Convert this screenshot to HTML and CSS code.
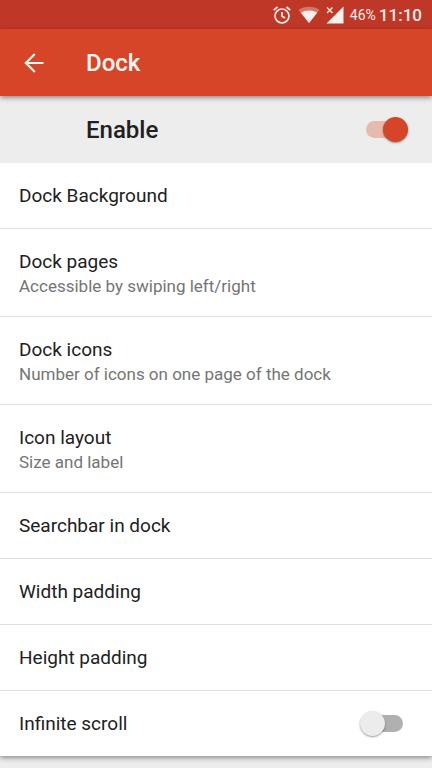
FILE: index.html
```html
<!DOCTYPE html>
<html lang="en">
<head>
<meta charset="utf-8">
<meta name="viewport" content="width=device-width, initial-scale=1">
<title>Dock</title>
<link rel="stylesheet" href="styles.css">
</head>
<body>
<div class="status">
  <svg class="status-icon" width="20" height="20" viewBox="0 0 20 20" fill="none" stroke="currentColor" stroke-width="1.7" aria-hidden="true">
    <circle cx="10" cy="11" r="7"/>
    <path d="M10 7v4.300l3 1.800M1.700 5.200l3.800-3.200M18.300 5.200l-3.800-3.200"/>
  </svg>
  <svg class="status-icon" width="22" height="18" viewBox="0 0 22 18" fill="currentColor" aria-hidden="true">
    <path opacity=".35" d="M11 17 .5 4C6.500-.3 15.500-.3 21.500 4z"/>
    <path d="M11 17 2.800 6.800c5-3.200 11.400-3.200 16.400 0z"/>
  </svg>
  <svg class="status-icon" width="18" height="18" viewBox="0 0 18 18" aria-hidden="true">
    <path fill="currentColor" d="M17.500.5v17H.5l8-8h1V8.500z"/>
    <path fill="none" stroke="currentColor" stroke-width="1.400" d="m1 1.500 5.500 5.500m0-5.500L1 7"/>
  </svg>
  <span class="battery">46%</span>
  <span class="clock">11:10</span>
</div>
<header class="appbar">
  <button class="back" type="button" aria-label="Back">
    <svg width="20" height="20" viewBox="0 0 20 20" fill="none" stroke="currentColor" stroke-width="2.200" aria-hidden="true">
      <path d="M19.500 10H2M10.800 1 1.800 10l9 9"/>
    </svg>
  </button>
  <h1 class="title">Dock</h1>
</header>
<main>
  <label class="enable">
    <span>Enable</span>
    <input class="switch" type="checkbox" role="switch" checked>
  </label>
  <div class="list">
    <button class="row" type="button"><span class="name">Dock Background</span></button>
    <button class="row row-double" type="button"><span class="name">Dock pages</span><span class="hint">Accessible by swiping left/right</span></button>
    <button class="row row-double" type="button"><span class="name">Dock icons</span><span class="hint">Number of icons on one page of the dock</span></button>
    <button class="row row-double" type="button"><span class="name">Icon layout</span><span class="hint">Size and label</span></button>
    <button class="row" type="button"><span class="name">Searchbar in dock</span></button>
    <button class="row" type="button"><span class="name">Width padding</span></button>
    <button class="row" type="button"><span class="name">Height padding</span></button>
    <label class="row row-switch"><span class="name">Infinite scroll</span><input class="switch" type="checkbox" role="switch"></label>
  </div>
</main>
</body>
</html>
```
FILE: styles.css
```css
* {
  box-sizing: border-box;
}

body {
  margin: 0;
  background: #ededed;
  color: #212121;
  font-family: Roboto, "Liberation Sans", sans-serif;
}

.status {
  display: flex;
  align-items: center;
  justify-content: flex-end;
  height: 29px;
  padding-right: 10px;
  background: #be3727;
  color: #fbeeec;
}

.status-icon {
  flex: none;
  margin-right: 6px;
}

.battery {
  font-size: 14px;
  margin-right: 3px;
}

.clock {
  font-size: 17px;
  font-weight: 500;
}

.appbar {
  position: relative;
  display: flex;
  align-items: center;
  height: 67px;
  padding-left: 14px;
  background: #d64527;
  color: #fff7f4;
  box-shadow: 0 2px 5px rgba(0, 0, 0, 0.4);
}

.back {
  display: grid;
  place-items: center;
  width: 40px;
  height: 40px;
  margin-right: 32px;
  padding: 0;
  border: 0;
  background: none;
  color: inherit;
}

.title {
  margin: 0;
  font-size: 24px;
  font-weight: 500;
}

.enable {
  display: flex;
  align-items: center;
  justify-content: space-between;
  height: 67px;
  padding: 0 30px 0 86px;
  font-size: 24px;
  font-weight: 500;
}

.list {
  position: relative;
  background: #fff;
  box-shadow: 0 2px 5px rgba(0, 0, 0, 0.4);
  clip-path: inset(0 0 -12px);
  margin-bottom: 12px;
}

.row {
  display: flex;
  flex-direction: column;
  justify-content: center;
  align-items: flex-start;
  width: 100%;
  height: 66px;
  padding: 0 29px 0 19px;
  border: 0;
  border-bottom: 1px solid #dfdfdf;
  background: none;
  color: inherit;
  font: inherit;
  text-align: left;
}

.row-double {
  height: 88px;
}

.row-switch {
  flex-direction: row;
  align-items: center;
  justify-content: space-between;
  height: 65px;
  border-bottom: 0;
}

.name {
  font-size: 19px;
  line-height: 26px;
}

.hint {
  color: #757575;
  font-size: 17px;
  line-height: 22px;
}

.switch {
  appearance: none;
  position: relative;
  flex: none;
  width: 36px;
  height: 17px;
  margin: 0;
  border-radius: 9px;
  background: #b0b0b0;
}

.switch::before {
  content: "";
  position: absolute;
  top: -4px;
  left: -7px;
  width: 25px;
  height: 25px;
  border-radius: 50%;
  background: #ececec;
  box-shadow: 0 1px 2px rgba(0, 0, 0, 0.4);
}

.switch:checked {
  background: #e8b9af;
}

.switch:checked::before {
  left: 17px;
  background: #d64527;
}
```
